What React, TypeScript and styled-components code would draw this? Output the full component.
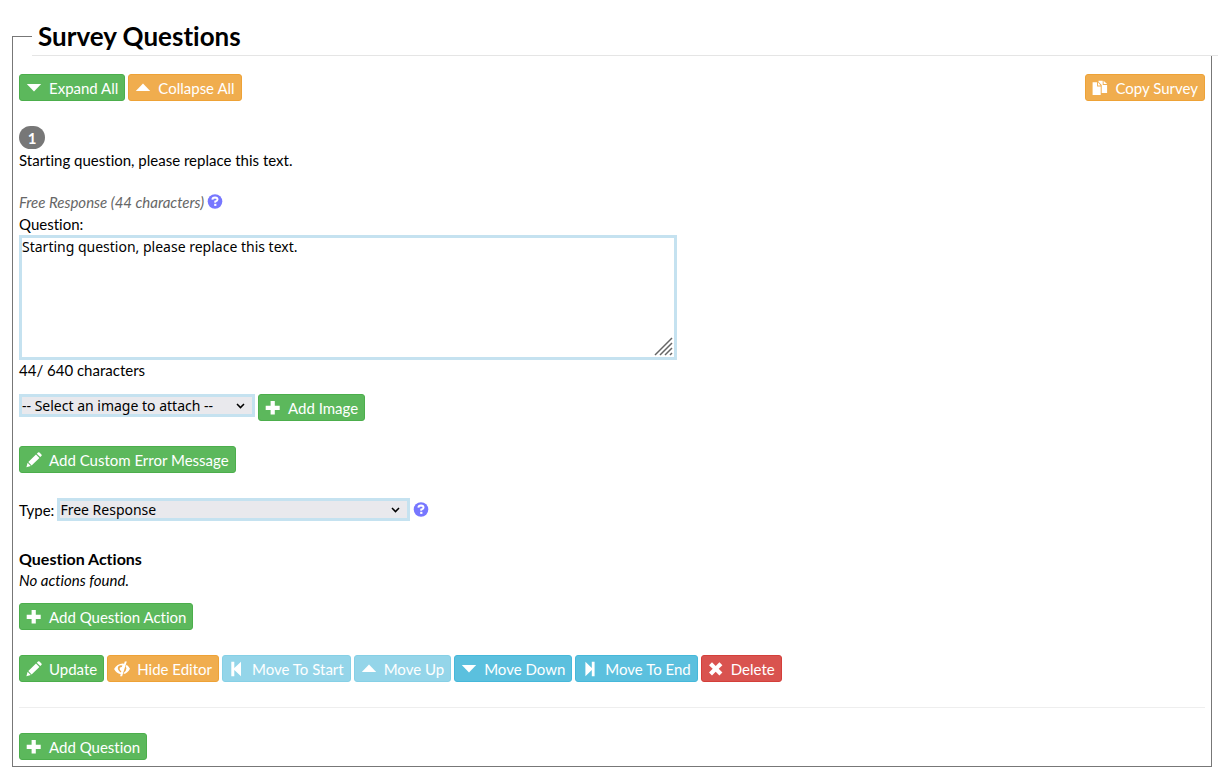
import React from "react";
import styled, { createGlobalStyle } from "styled-components";

const GlobalStyle = createGlobalStyle`
  *, *::before, *::after { box-sizing: border-box; }
  body {
    margin: 0;
    background: #fff;
    color: #000;
    font-family: Lato, "Liberation Sans", sans-serif;
    font-size: 15px;
    font-variant-ligatures: none;
    line-height: 22px;
  }
`;

const Page = styled.form`
  padding: 17px 6px 10px 12px;
  overflow-x: clip;
`;

const Panel = styled.fieldset`
  min-width: 0;
  margin: 0;
  padding: 0 6px 6px;
  border: 1px solid #777;
`;

const Title = styled.legend`
  width: 100%;
  margin: 0 0 18px 13px;
  padding: 0 6px;
  border-bottom: 1px solid #e5e5e5;
  font-size: 26px;
  font-weight: 700;
  line-height: 38px;
`;

const Row = styled.div<{ $gap?: number; $align?: string }>`
  display: flex;
  flex-wrap: wrap;
  align-items: ${(p) => p.$align ?? "center"};
  gap: 3px;
  margin-bottom: ${(p) => p.$gap ?? 0}px;
`;

const Toolbar = styled(Row)`
  justify-content: space-between;
`;

const tones = {
  green: ["#5cb85c", "#4cae4c"],
  orange: ["#f0ad4e", "#eea236"],
  blue: ["#5bc0de", "#46b8da"],
  red: ["#d9534f", "#d43f3a"],
};
type Tone = keyof typeof tones;

const Button = styled.button<{ $tone: Tone }>`
  display: inline-flex;
  align-items: center;
  gap: 7px;
  height: 27px;
  padding: 0 6px;
  border: 1px solid ${(p) => tones[p.$tone][1]};
  border-radius: 3px;
  background: ${(p) => tones[p.$tone][0]};
  color: #fff;
  font: inherit;
  font-variant-ligatures: none;
  line-height: 22px;
  white-space: nowrap;
  cursor: pointer;
  &:disabled { opacity: 0.65; cursor: not-allowed; }
`;

const Glyph = styled.svg`
  flex: none;
  width: 16px;
  height: 16px;
  fill: currentColor;
`;

const Badge = styled.span`
  display: block;
  width: 26px;
  height: 23px;
  border-radius: 12px;
  background: #777;
  color: #fff;
  font-weight: 700;
  line-height: 24px;
  text-align: center;
`;

const Text = styled.p<{ $gap?: number }>`
  margin: 0 0 ${(p) => p.$gap ?? 0}px;
`;

const Counter = styled(Text)`
  line-height: 20px;
`;

const Kind = styled.em`
  color: #666;
`;

const HelpButton = styled.button`
  display: inline-flex;
  padding: 0;
  border: 0;
  background: none;
  color: #7777ff;
  cursor: pointer;
`;

const Label = styled.label`
  display: block;
`;

const Editor = styled.div`
  position: relative;
  width: 658px;
  max-width: 100%;
`;

const TextArea = styled.textarea`
  display: block;
  width: 100%;
  height: 125px;
  padding: 0;
  border: 3px solid #c5e2f0;
  background: #fff;
  color: #000;
  font: 14px/18px "Noto Sans", sans-serif;
  resize: none;
  outline: none;
`;

const Grip = styled.svg`
  position: absolute;
  right: 3px;
  bottom: 3px;
  width: 20px;
  height: 20px;
  pointer-events: none;
`;

const Picker = styled.span<{ $width: number }>`
  position: relative;
  width: ${(p) => p.$width}px;
  max-width: 100%;
`;

const Select = styled.select`
  display: block;
  appearance: none;
  width: 100%;
  height: 23px;
  padding: 0 3px;
  border: 0;
  border-radius: 0;
  box-shadow: inset 0 0 0 3px #c5e2f0;
  background: #e9e9ed;
  color: #000;
  font: 14px "Noto Sans", sans-serif;
`;

const Chevron = styled.svg`
  position: absolute;
  right: 10px;
  top: 8px;
  width: 9px;
  height: 8px;
  pointer-events: none;
`;

const Heading = styled.h3`
  margin: 0;
  font-size: 16px;
  font-weight: 700;
  line-height: 20px;
`;

const Rule = styled.hr`
  margin: 0 0 25px;
  border: 0;
  border-top: 1px solid #eee;
`;

const glyphs = {
  down: <path d="M.8 4h14.4L8 11.4z" />,
  up: <path d="M.8 11h14.4L8 3.6z" />,
  plus: <path d="M5.6 1h4.2v4.7h4.9v4.2H9.8v4.7H5.6V9.9H.7V5.7h4.9z" />,
  pencil: (
    <path d="M12 .6q.7-.8 1.5 0l1.9 1.9q.7.7 0 1.4l-1.2 1.2-3.4-3.3zM10 2.6l3.4 3.3-7.8 7.5-3.3-3.3zM1.6 10.8l3.2 3.2-4.4 1.2z" />
  ),
  copy: (
    <path d="M.6 2.3h4.5v4.2h3.6V15H.6zM6 2.3l2.7 3.2H6zM6.5.8h4.2v4.1h4.4v8H9.7V5.1L6.5 1.8zM11.6.8l3.5 3.3h-3.5z" />
  ),
  eye: (
    <>
      <path d="M10.8.5h2L8.1 15.3h-2l.6-2C3.8 12.7 1.6 10.7.1 8 2 4.6 5 2.7 8.7 2.6l1.4.1zM8.4 4.6Q5.6 3.6 4 5.8 3 9.2 6.9 11.4l.4-1.3Q4.9 8.6 6 6.4L7.8 6z" fillRule="evenodd" />
      <path d="M8.4 6.6Q6.5 6.2 6.5 8q.2 1.1 1 1.5zM12.7 3.7Q14.5 5 16 7.7 13.8 12 9.5 13.1l.6-1.7q2.2-1.4 2.3-3.8 0-1.3-.8-2.1z" />
    </>
  ),
  start: <path d="M2.3.8h3v6.3L12 .8v14.4L5.3 8.9v6.3h-3z" />,
  end: <path d="M3.4.8l6.4 6.3V.8h2.8v14.4H9.8V8.9l-6.4 6.3z" />,
  remove: (
    <path d="M4 1.2l3.7 3.7 3.7-3.7 3 3-3.7 3.6 3.7 3.7-3 3-3.7-3.7L4 14.5l-3-3 3.7-3.7L1 4.2z" />
  ),
};
type GlyphName = keyof typeof glyphs;

function Action({ icon, tone, children, disabled }: { icon: GlyphName; tone: Tone; children: string; disabled?: boolean }) {
  return (
    <Button type="button" $tone={tone} disabled={disabled}>
      <Glyph viewBox="0 0 16 16" aria-hidden="true">{glyphs[icon]}</Glyph>
      {children}
    </Button>
  );
}

function Help() {
  return (
    <HelpButton type="button" aria-label="Help">
      <Glyph viewBox="0 0 16 16" aria-hidden="true">
        <circle cx="8" cy="7.5" r="7.3" />
        <path d="M5.4 5.6Q5.5 3.4 8 3.4q2.5.1 2.5 2.1Q10.4 6.9 8.3 7.5v1.2" fill="none" stroke="#fff" strokeWidth="2" />
        <path d="M7.2 9.8h2.2v2.1H7.2z" fill="#fff" />
      </Glyph>
    </HelpButton>
  );
}

function Dropdown({ id, width, option, label }: { id: string; width: number; option: string; label?: string }) {
  return (
    <Picker $width={width}>
      <Select id={id} aria-label={label}>
        <option>{option}</option>
      </Select>
      <Chevron viewBox="0 0 9 8" aria-hidden="true">
        <path d="M1 2l3.5 3.6L8 2" fill="none" stroke="#000" strokeWidth="1.5" />
      </Chevron>
    </Picker>
  );
}

export default function App() {
  return (
    <>
      <GlobalStyle />
      <Page>
        <Panel>
          <Title>Survey Questions</Title>
          <Toolbar $gap={25}>
            <Row>
              <Action icon="down" tone="green">Expand All</Action>
              <Action icon="up" tone="orange">Collapse All</Action>
            </Row>
            <Action icon="copy" tone="orange">Copy Survey</Action>
          </Toolbar>

          <Badge>1</Badge>
          <Text $gap={20}>Starting question, please replace this text.</Text>

          <Row>
            <Kind>Free Response (44 characters)</Kind>
            <Help />
          </Row>
          <Label htmlFor="question">Question:</Label>
          <Editor>
            <TextArea id="question" defaultValue="Starting question, please replace this text." />
            <Grip viewBox="0 0 20 20" aria-hidden="true">
              <path d="M1 18L18 1M6 18L18 6M11 18l7-7M16 18l2-2" fill="none" stroke="#666" strokeWidth="1.5" />
            </Grip>
          </Editor>
          <Counter $gap={14}>44/ 640 characters</Counter>

          <Row $gap={25} $align="flex-start">
            <Dropdown id="image" width={236} option="-- Select an image to attach --" label="Image" />
            <Action icon="plus" tone="green">Add Image</Action>
          </Row>
          <Row $gap={25}>
            <Action icon="pencil" tone="green">Add Custom Error Message</Action>
          </Row>
          <Row $gap={28}>
            <Label htmlFor="type">Type:</Label>
            <Dropdown id="type" width={353} option="Free Response" />
            <Help />
          </Row>

          <Heading>Question Actions</Heading>
          <Text $gap={12}>
            <em>No actions found.</em>
          </Text>
          <Row $gap={25}>
            <Action icon="plus" tone="green">Add Question Action</Action>
          </Row>
          <Row $gap={25}>
            <Action icon="pencil" tone="green">Update</Action>
            <Action icon="eye" tone="orange">Hide Editor</Action>
            <Action icon="start" tone="blue" disabled>Move To Start</Action>
            <Action icon="up" tone="blue" disabled>Move Up</Action>
            <Action icon="down" tone="blue">Move Down</Action>
            <Action icon="end" tone="blue">Move To End</Action>
            <Action icon="remove" tone="red">Delete</Action>
          </Row>
          <Rule />
          <Action icon="plus" tone="green">Add Question</Action>
        </Panel>
      </Page>
    </>
  );
}
